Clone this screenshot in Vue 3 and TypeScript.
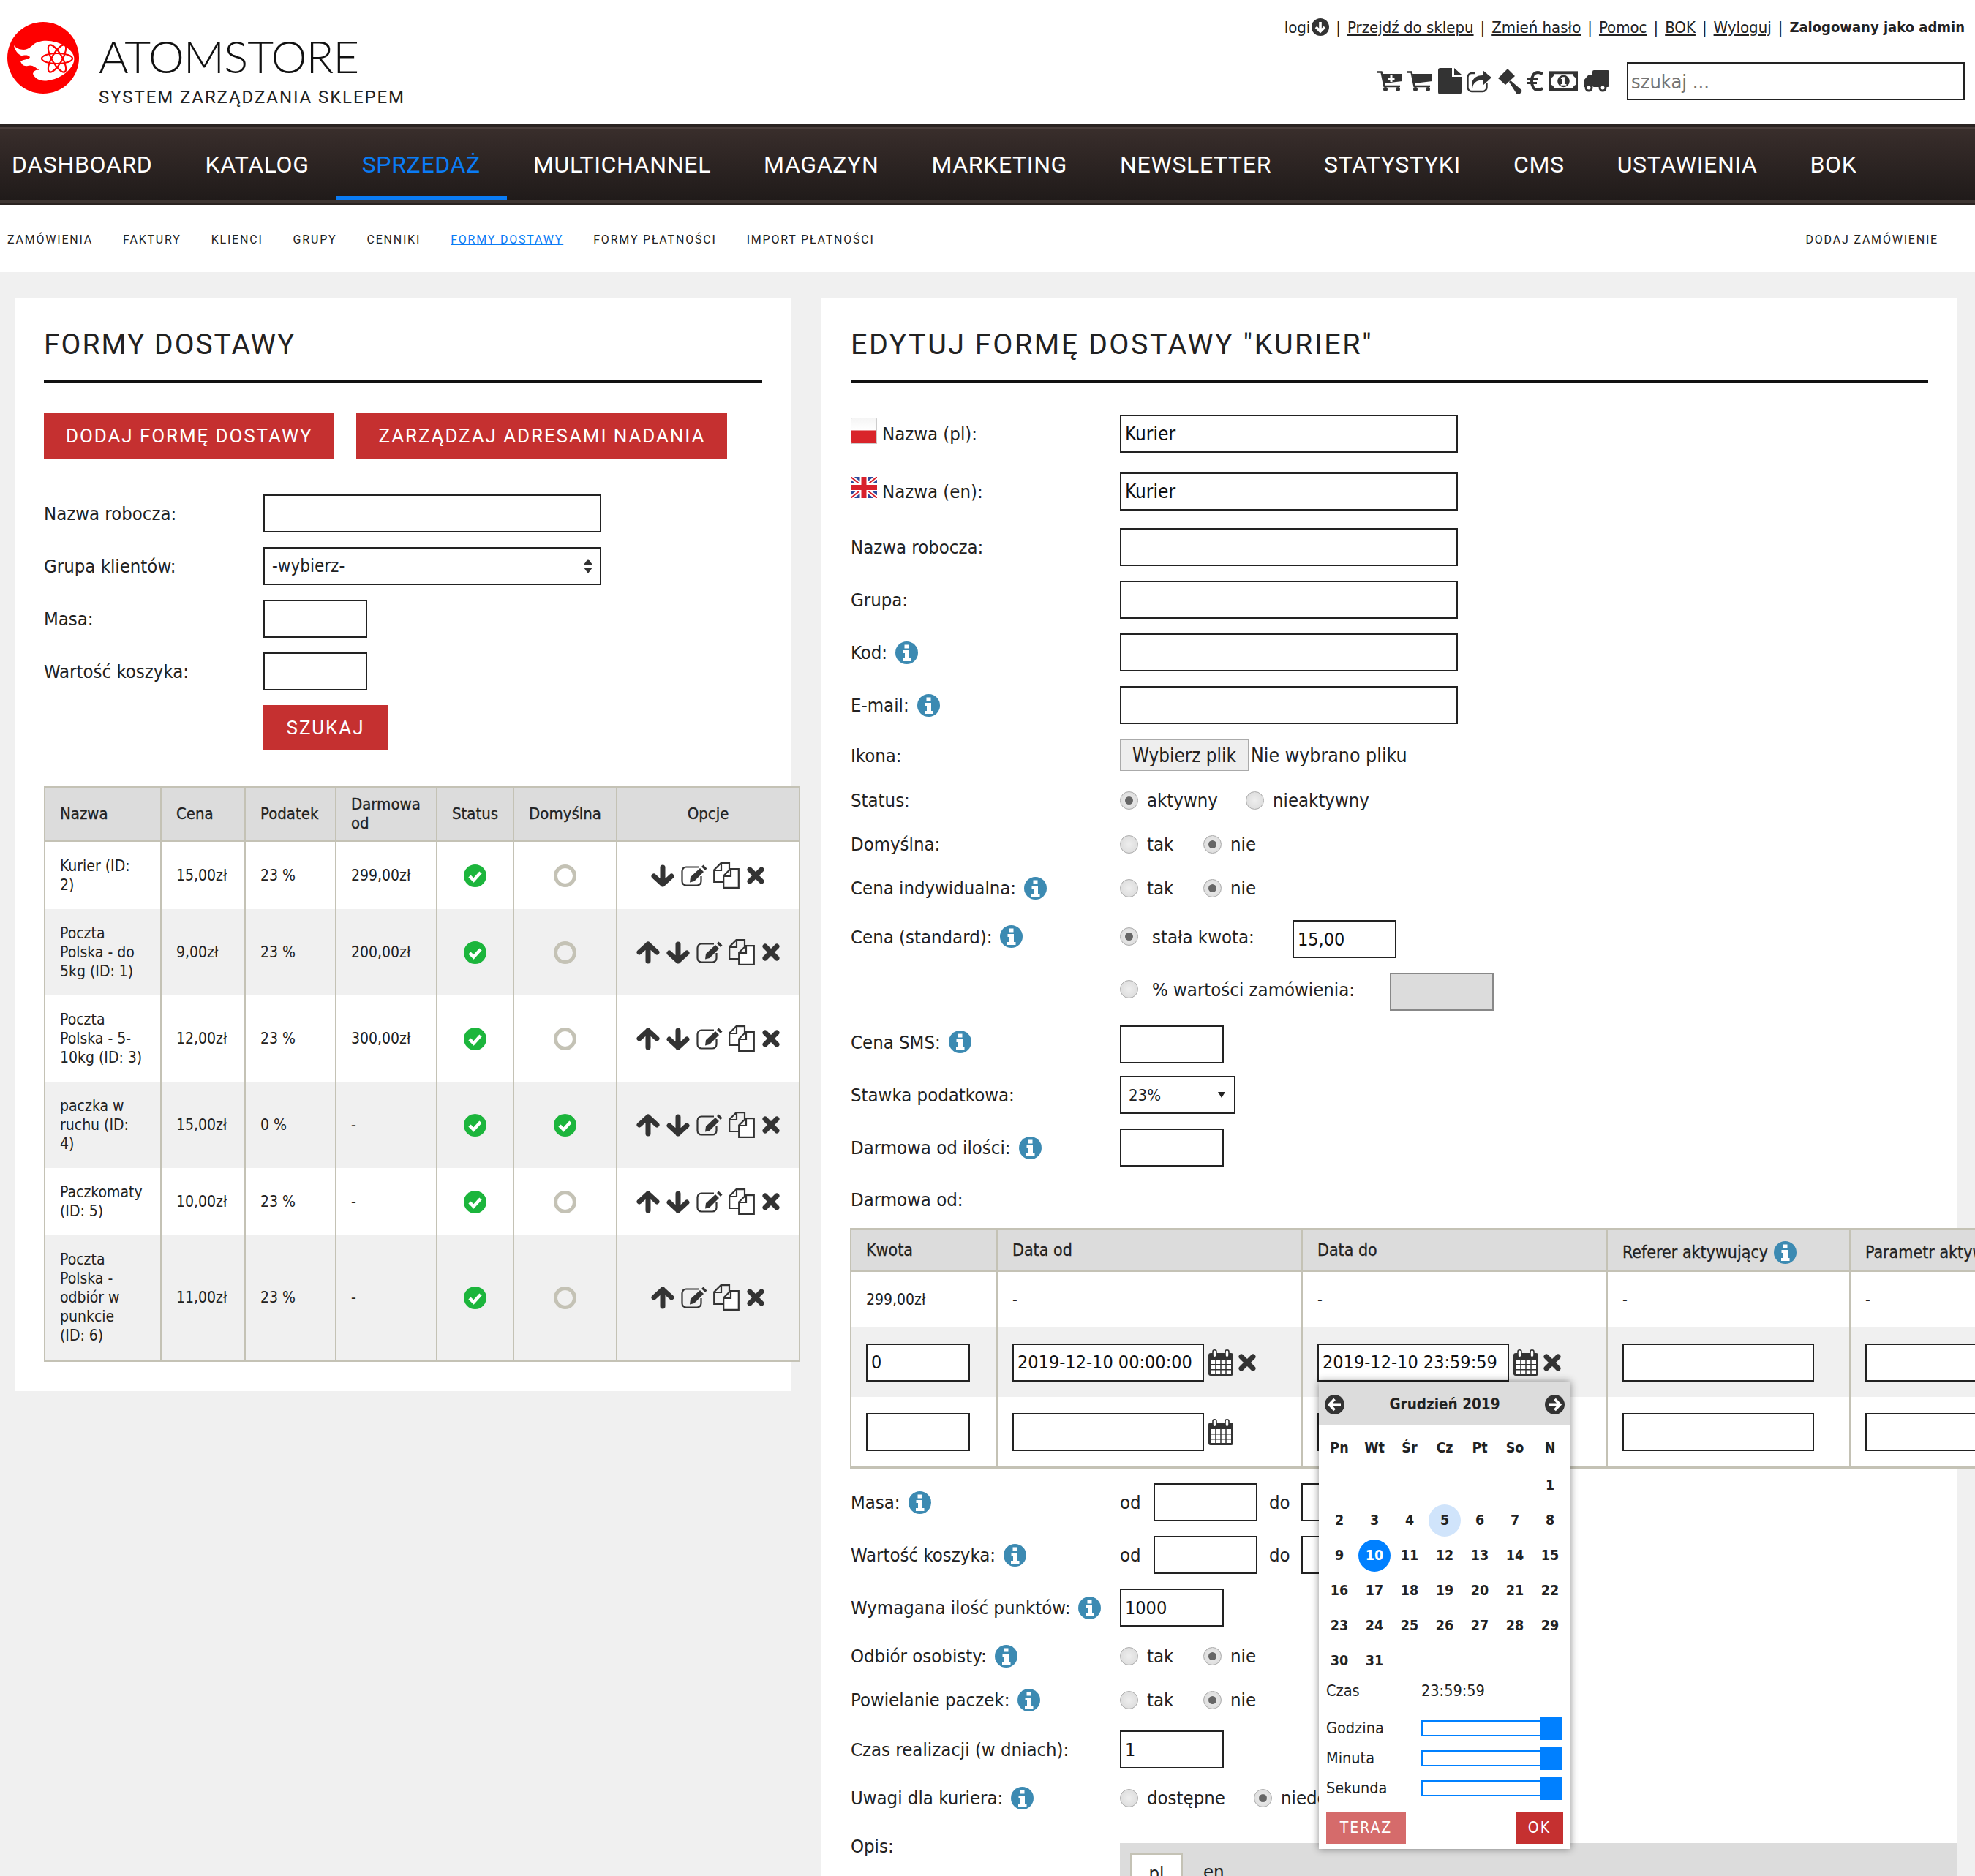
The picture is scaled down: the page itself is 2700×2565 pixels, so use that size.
<script setup lang="ts">
interface Row { name: string; price: string; tax: string; free: string; def: boolean; up: boolean; down: boolean }
const nav: string[] = ['DASHBOARD', 'KATALOG', 'SPRZEDAŻ', 'MULTICHANNEL', 'MAGAZYN', 'MARKETING', 'NEWSLETTER', 'STATYSTYKI', 'CMS', 'USTAWIENIA', 'BOK']
const sub: string[] = ['ZAMÓWIENIA', 'FAKTURY', 'KLIENCI', 'GRUPY', 'CENNIKI', 'FORMY DOSTAWY', 'FORMY PŁATNOŚCI', 'IMPORT PŁATNOŚCI']
const topLinks: string[] = ['Przejdź do sklepu', 'Zmień hasło', 'Pomoc', 'BOK', 'Wyloguj']
const topIcons: string[] = ['cartplus', 'cart', 'file', 'share', 'gavel', 'euro', 'money', 'truck']
const rows: Row[] = [
  { name: 'Kurier (ID: 2)', price: '15,00zł', tax: '23 %', free: '299,00zł', def: false, up: false, down: true },
  { name: 'Poczta Polska - do 5kg (ID: 1)', price: '9,00zł', tax: '23 %', free: '200,00zł', def: false, up: true, down: true },
  { name: 'Poczta Polska - 5-10kg (ID: 3)', price: '12,00zł', tax: '23 %', free: '300,00zł', def: false, up: true, down: true },
  { name: 'paczka w ruchu (ID: 4)', price: '15,00zł', tax: '0 %', free: '-', def: true, up: true, down: true },
  { name: 'Paczkomaty (ID: 5)', price: '10,00zł', tax: '23 %', free: '-', def: false, up: true, down: true },
  { name: 'Poczta Polska - odbiór w punkcie (ID:\u00a06)', price: '11,00zł', tax: '23 %', free: '-', def: false, up: true, down: false },
]
const weekdays: string[] = ['Pn', 'Wt', 'Śr', 'Cz', 'Pt', 'So', 'N']
const blanks: number[] = [1, 2, 3, 4, 5, 6]
const days: number[] = Array.from({ length: 31 }, (_, i) => i + 1)
const sliders: string[] = ['Godzina', 'Minuta', 'Sekunda']
</script>

<template>
  <div class="page">
    <svg class="defs" aria-hidden="true">
      <symbol id="i-down" viewBox="0 0 32 31"><path d="M16 4v23M4 16l12 11 12-11" fill="none" stroke="#333" stroke-width="7" stroke-linecap="round" stroke-linejoin="round" /></symbol>
      <symbol id="i-up" viewBox="0 0 32 31"><path d="M16 27V4M4 15L16 4l12 11" fill="none" stroke="#333" stroke-width="7" stroke-linecap="round" stroke-linejoin="round" /></symbol>
      <symbol id="i-x" viewBox="0 0 26 26"><path d="M5 5l16 16M21 5L5 21" fill="none" stroke="#333" stroke-width="7" stroke-linecap="round" /></symbol>
      <symbol id="i-edit" viewBox="0 0 36 30">
        <path d="M24 3.500H7A5.500 5.500 0 0 0 1.500 9v14A5.500 5.500 0 0 0 7 28.500h15a5.500 5.500 0 0 0 5.500-5.500V16" fill="none" stroke="#333" stroke-width="2.200" />
        <path d="M13 17L26 5l5 5-13 13-6 1.500zM28 3l2.500-2.500 5 5L33 8z" fill="#333" />
      </symbol>
      <symbol id="i-copy" viewBox="0 0 36 36">
        <path d="M14 27H1.200V10.500L10.500 1.200H22V10M1.200 11H11V1.200" fill="none" stroke="#333" stroke-width="2.200" />
        <path d="M14.200 34.800V18.500L23.500 9.200H34.800V34.800zM14.200 19H24V9.200" fill="#fff" stroke="#333" stroke-width="2.200" />
      </symbol>
      <symbol id="i-info" viewBox="0 0 31 31">
        <circle cx="15.500" cy="15.500" r="15.500" fill="#3c8ab2" />
        <path d="M12.500 4.500h6v5h-6zM10.500 12h8.500v11h2.500v4H10v-4h3v-7h-2.500z" fill="#fff" />
      </symbol>
      <symbol id="i-check" viewBox="0 0 31 31">
        <circle cx="15.500" cy="15.500" r="15.500" fill="#1cb53c" />
        <path d="M8 16l5.500 5.500L23 11" fill="none" stroke="#fff" stroke-width="4.500" />
      </symbol>
      <symbol id="i-ring" viewBox="0 0 31 31"><circle cx="15.500" cy="15.500" r="13" fill="none" stroke="#c4c2b5" stroke-width="5" /></symbol>
      <symbol id="i-cal" viewBox="0 0 34 36">
        <rect y="5" width="34" height="31" rx="3" fill="#333" />
        <path d="M3 14h28v6H3zM3 21.500h28V27H3zM3 28.500h28V33H3z" fill="#fff" />
        <path d="M10 14v19M17 14v19M24 14v19" stroke="#333" stroke-width="1.500" />
        <rect x="6" y="0.800" width="5" height="10" rx="2.500" fill="#fff" stroke="#333" stroke-width="1.600" />
        <rect x="23" y="0.800" width="5" height="10" rx="2.500" fill="#fff" stroke="#333" stroke-width="1.600" />
      </symbol>
      <symbol id="i-cart" viewBox="0 0 34 28">
        <path d="M0 1.500h5.500L9.500 21H31" fill="none" stroke="#333" stroke-width="2.500" />
        <path d="M7 4h27v10L9 17z" fill="#333" />
        <circle cx="11" cy="25" r="3" fill="#333" /><circle cx="28" cy="25" r="3" fill="#333" />
      </symbol>
      <symbol id="i-cartplus" viewBox="0 0 34 28">
        <path d="M0 1.500h5.500L9.500 21H31" fill="none" stroke="#333" stroke-width="2.500" />
        <path d="M7 4h27v10L9 17z" fill="#333" />
        <path d="M17.500 6h3v3h3v3h-3v3h-3v-3h-3V9h3z" fill="#fff" />
        <circle cx="11" cy="25" r="3" fill="#333" /><circle cx="28" cy="25" r="3" fill="#333" />
      </symbol>
      <symbol id="i-file" viewBox="0 0 32 36">
        <path d="M0 3Q0 0 3 0h16v12h13v21q0 3-3 3H3q-3 0-3-3zM22 0l10 9H22z" fill="#333" />
      </symbol>
      <symbol id="i-share" viewBox="0 0 34 31">
        <path d="M12 4H7a5.500 5.500 0 0 0-5.500 5.500v14A5.500 5.500 0 0 0 7 29h15a5.500 5.500 0 0 0 5.500-5.500V18" fill="none" stroke="#333" stroke-width="2.400" />
        <path d="M22 0l12 10-12 11v-7C14 13 9 17 8 25 5 14 11 7 22 7z" fill="#333" />
      </symbol>
      <symbol id="i-gavel" viewBox="0 0 34 35">
        <path d="M14 0l10 10-13 12L1 13zM16 18l2-2 15 13q1 2-.5 3.500L30 35q-2 1-3.500-.5z" fill="#333" />
      </symbol>
      <symbol id="i-euro" viewBox="0 0 22 28">
        <path d="M21 4Q17 2 14.500 2C9 2 6 7 6 14s3 12 8.500 12q2.500 0 6.500-2" fill="none" stroke="#333" stroke-width="4" />
        <path d="M0 10h15v3H0zM0 15h13v3H0z" fill="#333" />
      </symbol>
      <symbol id="i-money" viewBox="0 0 40 28">
        <rect width="40" height="28" fill="#333" />
        <path d="M7 4h26q1 4 4 5v10q-3 1-4 5H7q-1-4-4-5V9q3-1 4-5z" fill="#fff" />
        <circle cx="20" cy="14" r="8.500" fill="#333" />
        <path d="M18 8h3.500v10H24v2h-8v-2h2v-7h-2z" fill="#fff" />
      </symbol>
      <symbol id="i-truck" viewBox="0 0 36 30">
        <rect x="13" width="23" height="23" rx="2" fill="#333" />
        <path d="M12 7H7L1 14v9h11z" fill="#333" />
        <circle cx="8" cy="24" r="5.500" fill="#333" /><circle cx="8" cy="24" r="2.500" fill="#fff" />
        <circle cx="27" cy="24" r="5.500" fill="#333" /><circle cx="27" cy="24" r="2.500" fill="#fff" />
      </symbol>
      <symbol id="i-cdown" viewBox="0 0 24 24">
        <circle cx="12" cy="12" r="12" fill="#333" />
        <path d="M12 5v12M6 12l6 6 6-6" fill="none" stroke="#fff" stroke-width="3.600" />
      </symbol>
      <symbol id="i-cleft" viewBox="0 0 27 27">
        <circle cx="13.500" cy="13.500" r="13.500" fill="#333" />
        <path d="M22 13.500H7M13.500 6l-7 7.500 7 7.500" fill="none" stroke="#fff" stroke-width="3.800" />
      </symbol>
      <symbol id="i-cright" viewBox="0 0 27 27">
        <circle cx="13.500" cy="13.500" r="13.500" fill="#333" />
        <path d="M5 13.500h15M13.500 6l7 7.500-7 7.500" fill="none" stroke="#fff" stroke-width="3.800" />
      </symbol>
    </svg>

    <header class="top">
      <div class="brand">
        <svg class="logo" viewBox="0 0 98 98">
          <circle cx="49" cy="49" r="49" fill="#fe0000" />
          <path d="M9 32c5 6 13 7 18 5 6-2 9-9 17-10 8-3 26-1 36 7 8 6 13 12 11 20-3 12-19 24-35 26-10 2-18-2-21-9 1-5 5-6 9-5-6-4-10-8-16-6-6 1-8-2-10-6 6-4 12-2 13-6-3-4-9-2-12-2-5-2-9-8-10-14z" fill="#fff" />
          <g fill="none" stroke="#fe0000" stroke-width="2.200">
            <ellipse cx="68" cy="50" rx="21" ry="7" />
            <ellipse cx="68" cy="50" rx="21" ry="7" transform="rotate(60 68 50)" />
            <ellipse cx="68" cy="50" rx="21" ry="7" transform="rotate(120 68 50)" />
          </g>
        </svg>
        <div class="brand-text">
          <div class="brand-name">ATOMSTORE</div>
          <div class="brand-sub">SYSTEM ZARZĄDZANIA SKLEPEM</div>
        </div>
      </div>
      <div class="top-right">
        <div class="links">
          <span class="logi">logi<svg class="i-cdown"><use href="#i-cdown" /></svg></span>
          <template v-for="l in topLinks" :key="l">
            <span class="sep">|</span><a class="tlink">{{ l }}</a>
          </template>
          <span class="sep">|</span><b>Zalogowany jako admin</b>
        </div>
        <div class="tools">
          <svg v-for="ic in topIcons" :key="ic" :class="'t-' + ic"><use :href="'#i-' + ic" /></svg>
          <input class="search" placeholder="szukaj ..." />
        </div>
      </div>
    </header>

    <nav class="nav">
      <a v-for="n in nav" :key="n" class="nav-item" :class="{ active: n === 'SPRZEDAŻ' }">{{ n }}</a>
    </nav>

    <div class="subnav">
      <div class="sub-left">
        <a v-for="s in sub" :key="s" :class="{ current: s === 'FORMY DOSTAWY' }">{{ s }}</a>
      </div>
      <a>DODAJ ZAMÓWIENIE</a>
    </div>

    <main class="content">
      <section class="panel left">
        <h2>FORMY DOSTAWY</h2>
        <div class="btns">
          <button class="btn">DODAJ FORMĘ DOSTAWY</button>
          <button class="btn">ZARZĄDZAJ ADRESAMI NADANIA</button>
        </div>
        <div class="lform">
          <label class="lrow"><span>Nazwa robocza:</span><input class="inp w-l" /></label>
          <label class="lrow"><span>Grupa klientów:</span>
            <span class="sel w-l"><span>-wybierz-</span><i class="updown"></i></span>
          </label>
          <label class="lrow"><span>Masa:</span><input class="inp w-s" /></label>
          <label class="lrow"><span>Wartość koszyka:</span><input class="inp w-s" /></label>
          <div class="lrow"><span></span><button class="btn btn-search">SZUKAJ</button></div>
        </div>

        <table class="tbl list">
          <colgroup><col class="c1" /><col class="c2" /><col class="c3" /><col class="c4" /><col class="c5" /><col class="c6" /><col class="c7" /></colgroup>
          <thead>
            <tr><th>Nazwa</th><th>Cena</th><th>Podatek</th><th>Darmowa od</th><th class="ctr">Status</th><th class="ctr">Domyślna</th><th class="ctr">Opcje</th></tr>
          </thead>
          <tbody>
            <tr v-for="r in rows" :key="r.name">
              <td>{{ r.name }}</td>
              <td>{{ r.price }}</td>
              <td>{{ r.tax }}</td>
              <td>{{ r.free }}</td>
              <td class="ctr"><svg class="i-state"><use href="#i-check" /></svg></td>
              <td class="ctr"><svg class="i-state"><use :href="r.def ? '#i-check' : '#i-ring'" /></svg></td>
              <td>
                <div class="opts">
                  <svg v-if="r.up" class="i-arrow"><use href="#i-up" /></svg>
                  <svg v-if="r.down" class="i-arrow"><use href="#i-down" /></svg>
                  <svg class="i-edit"><use href="#i-edit" /></svg>
                  <svg class="i-copy"><use href="#i-copy" /></svg>
                  <svg class="i-x"><use href="#i-x" /></svg>
                </div>
              </td>
            </tr>
          </tbody>
        </table>
      </section>

      <section class="panel right">
        <h2>EDYTUJ FORMĘ DOSTAWY "KURIER"</h2>
        <div class="form">
          <div class="row">
            <span class="lab"><span class="flag-pl"></span>Nazwa (pl):</span>
            <input class="inp w-l" value="Kurier" />
          </div>
          <div class="row mt-7">
            <span class="lab"><svg class="flag-en" viewBox="0 0 36 29"><rect width="36" height="29" fill="#2b4a9b" /><path d="M0 0l36 29M36 0L0 29" stroke="#fff" stroke-width="6" /><path d="M0 0l36 29M36 0L0 29" stroke="#d8202c" stroke-width="2" /><path d="M18 0v29M0 14.500h36" stroke="#fff" stroke-width="11" /><path d="M18 0v29M0 14.500h36" stroke="#d8202c" stroke-width="7" /></svg>Nazwa (en):</span>
            <input class="inp w-l" value="Kurier" />
          </div>
          <div class="row mt-4"><span class="lab">Nazwa robocza:</span><input class="inp w-l" /></div>
          <div class="row"><span class="lab">Grupa:</span><input class="inp w-l" /></div>
          <div class="row"><span class="lab">Kod:<svg class="i-info"><use href="#i-info" /></svg></span><input class="inp w-l" /></div>
          <div class="row"><span class="lab">E-mail:<svg class="i-info"><use href="#i-info" /></svg></span><input class="inp w-l" /></div>
          <div class="row file-row"><span class="lab">Ikona:</span><span class="file"><button class="file-btn">Wybierz plik</button>Nie wybrano pliku</span></div>
          <div class="row tr"><span class="lab">Status:</span>
            <span class="radios"><span class="radio on"></span><span class="rt r1">aktywny</span><span class="radio"></span><span class="rt">nieaktywny</span></span>
          </div>
          <div class="row tr"><span class="lab">Domyślna:</span>
            <span class="radios"><span class="radio"></span><span class="rt r2">tak</span><span class="radio on"></span><span class="rt">nie</span></span>
          </div>
          <div class="row tr"><span class="lab">Cena indywidualna:<svg class="i-info"><use href="#i-info" /></svg></span>
            <span class="radios"><span class="radio"></span><span class="rt r2">tak</span><span class="radio on"></span><span class="rt">nie</span></span>
          </div>
          <div class="row mt-4 lift"><span class="lab">Cena (standard):<svg class="i-info"><use href="#i-info" /></svg></span>
            <span class="radios"><span class="radio on"></span><span class="rt r3">stała kwota:</span><input class="inp w-s" value="15,00" /></span>
          </div>
          <div class="row lift"><span class="lab"></span>
            <span class="radios"><span class="radio"></span><span class="rt r4">% wartości zamówienia:</span><input class="inp w-s dis" disabled /></span>
          </div>
          <div class="row lift"><span class="lab">Cena SMS:<svg class="i-info"><use href="#i-info" /></svg></span><input class="inp w-s" /></div>
          <div class="row tight"><span class="lab">Stawka podatkowa:</span><span class="sel w-m"><span>23%</span><i class="tri"></i></span></div>
          <div class="row"><span class="lab">Darmowa od ilości:<svg class="i-info"><use href="#i-info" /></svg></span><input class="inp w-s" /></div>
          <div class="row tr mt-5"><span class="lab">Darmowa od:</span></div>

          <table class="tbl wide">
            <colgroup><col class="d1" /><col class="d2" /><col class="d3" /><col class="d4" /><col class="d5" /></colgroup>
            <thead>
              <tr><th>Kwota</th><th>Data od</th><th>Data do</th><th class="nudge">Referer aktywujący<svg class="i-info"><use href="#i-info" /></svg></th><th class="nudge">Parametr aktywujący</th></tr>
            </thead>
            <tbody>
              <tr><td>299,00zł</td><td>-</td><td>-</td><td>-</td><td>-</td></tr>
              <tr>
                <td class="icell"><input class="inp w-s" value="0" /></td>
                <td class="icell"><span class="dt"><input class="inp w-d" value="2019-12-10 00:00:00" /><svg class="i-cal"><use href="#i-cal" /></svg><svg class="i-x d-x"><use href="#i-x" /></svg></span></td>
                <td class="icell">
                  <span class="dt"><span class="pop-anchor"><input class="inp w-d" value="2019-12-10 23:59:59" />
                    <div class="cal">
                      <div class="cal-head">
                        <svg class="i-nav"><use href="#i-cleft" /></svg>
                        <b>Grudzień 2019</b>
                        <svg class="i-nav"><use href="#i-cright" /></svg>
                      </div>
                      <div class="cal-week"><span v-for="w in weekdays" :key="w">{{ w }}</span></div>
                      <div class="cal-days">
                        <span v-for="b in blanks" :key="'b' + b"></span>
                        <span v-for="d in days" :key="d" class="day" :class="{ today: d === 5, sel2: d === 10 }">{{ d }}</span>
                      </div>
                      <div class="cal-time"><span>Czas</span><span>23:59:59</span></div>
                      <div v-for="s in sliders" :key="s" class="cal-slider"><span>{{ s }}</span><span class="track"><i class="handle"></i></span></div>
                      <div class="cal-btns"><button class="cbtn now">TERAZ</button><button class="cbtn">OK</button></div>
                    </div>
                  </span><svg class="i-cal"><use href="#i-cal" /></svg><svg class="i-x d-x"><use href="#i-x" /></svg></span>
                </td>
                <td class="icell"><input class="inp w-d" /></td>
                <td class="icell"><input class="inp w-d" /></td>
              </tr>
              <tr>
                <td class="icell"><input class="inp w-s" /></td>
                <td class="icell"><span class="dt"><input class="inp w-d" /><svg class="i-cal"><use href="#i-cal" /></svg></span></td>
                <td class="icell"><span class="dt"><input class="inp w-d" /><svg class="i-cal"><use href="#i-cal" /></svg></span></td>
                <td class="icell"><input class="inp w-d" /></td>
                <td class="icell"><input class="inp w-d" /></td>
              </tr>
            </tbody>
          </table>

          <div class="row"><span class="lab">Masa:<svg class="i-info"><use href="#i-info" /></svg></span>
            <span class="range"><span>od</span><input class="inp w-s" /><span>do</span><input class="inp w-s" /></span>
          </div>
          <div class="row"><span class="lab">Wartość koszyka:<svg class="i-info"><use href="#i-info" /></svg></span>
            <span class="range"><span>od</span><input class="inp w-s" /><span>do</span><input class="inp w-s" /></span>
          </div>
          <div class="row"><span class="lab">Wymagana ilość punktów:<svg class="i-info"><use href="#i-info" /></svg></span><input class="inp w-s" value="1000" /></div>
          <div class="row tr"><span class="lab">Odbiór osobisty:<svg class="i-info"><use href="#i-info" /></svg></span>
            <span class="radios"><span class="radio"></span><span class="rt r2">tak</span><span class="radio on"></span><span class="rt">nie</span></span>
          </div>
          <div class="row tr"><span class="lab">Powielanie paczek:<svg class="i-info"><use href="#i-info" /></svg></span>
            <span class="radios"><span class="radio"></span><span class="rt r2">tak</span><span class="radio on"></span><span class="rt">nie</span></span>
          </div>
          <div class="row mt-2"><span class="lab">Czas realizacji (w dniach):</span><input class="inp w-s" value="1" /></div>
          <div class="row tr"><span class="lab">Uwagi dla kuriera:<svg class="i-info"><use href="#i-info" /></svg></span>
            <span class="radios"><span class="radio"></span><span class="rt r5">dostępne</span><span class="radio on"></span><span class="rt">niedostępne</span></span>
          </div>
          <div class="row opis"><span class="lab">Opis:</span>
            <div class="editor"><span class="tab on">pl</span><span class="tab">en</span></div>
          </div>
        </div>
      </section>
    </main>
  </div>
</template>

<style>
html, body { margin: 0; background: #f0f0f0; }
</style>

<style scoped>
.page {
  width: 2700px; height: 2565px; overflow: hidden; background: #f0f0f0; color: #222; position: relative;
  font-family: "DejaVu Sans Condensed", "DejaVu Sans", sans-serif; font-stretch: condensed; font-size: 25.500px;
}
.defs { position: absolute; width: 0; height: 0; }
.top { height: 170px; background: #fff; display: flex; justify-content: space-between; box-sizing: border-box; }
.brand { display: flex; padding: 30px 0 0 10px; gap: 27px; }
.logo { width: 98px; height: 98px; }
.brand-text { padding-top: 13px; }
.brand-name { font-family: Lato, sans-serif; font-weight: 300; font-size: 62px; line-height: 66px; letter-spacing: -1px; color: #111; font-stretch: normal; }
.brand-sub { font-family: Roboto, sans-serif; font-stretch: normal; font-size: 24px; letter-spacing: 1.900px; line-height: 30px; margin-top: 9px; }
.top-right { display: flex; flex-direction: column; align-items: flex-end; padding-right: 14px; }
.links { margin-top: 22px; height: 30px; display: flex; align-items: center; font-size: 22px; }
.links b { font-size: 20px; }
.logi { display: inline-flex; align-items: center; gap: 2px; }
.i-cdown { width: 24px; height: 24px; }
.sep { margin: 0 9px; }
.tlink { text-decoration: underline; }
.tools { display: flex; align-items: center; margin-top: 33px; gap: 7.500px; }
.tools svg { display: block; }
.t-cartplus, .t-cart { width: 34px; height: 28px; }
.t-file { width: 32px; height: 36px; }
.t-share { width: 34px; height: 31px; }
.t-gavel { width: 34px; height: 35px; }
.t-euro { width: 22px; height: 28px; }
.t-money { width: 39px; height: 28px; }
.t-truck { width: 36px; height: 30px; margin-right: 16.500px; }
.search { width: 462px; height: 52px; box-sizing: border-box; border: 2px solid #222; padding: 0 4px; font: inherit; font-size: 27px; font-stretch: condensed; outline: none; }
.search::placeholder { color: #757575; opacity: 1; }

.nav { height: 110px; display: flex; box-sizing: border-box; padding-left: 16px; background: linear-gradient(#3a2f2c 0, #342a28 20%, #1f1a19 100%); border-top: 3px solid #2a2321; border-bottom: 3px solid #2a2321; box-shadow: inset 0 3px 0 #4a3f3c, inset 0 -4px 0 #3e3532; }
.nav-item { font-family: Roboto, sans-serif; font-stretch: normal; color: #fff; font-size: 32px; letter-spacing: 0.650px; line-height: 104px; padding: 0 36px; }
.nav-item:first-child { padding-left: 0; }
.nav-item.active { color: #0a7cf5; border-bottom: 6px solid #0a7cf5; box-sizing: content-box; height: 95px; }

.subnav { height: 92px; background: #fff; display: flex; justify-content: space-between; align-items: center; padding: 3px 50px 0 10px; box-sizing: border-box; }
.subnav a { font-family: Roboto, sans-serif; font-stretch: normal; font-size: 16px; letter-spacing: 1.800px; color: #222; }
.sub-left { display: flex; gap: 41px; }
.subnav a.current { color: #0a7cf5; text-decoration: underline; }

.content { display: flex; align-items: flex-start; padding: 36px 24px 0 20px; gap: 41px; }
.panel { background: #fff; box-sizing: border-box; padding: 40px 40px 0; }
.panel.left { width: 1062px; height: 1494px; flex: none; }
.panel.right { flex: 1; min-width: 0; height: 2300px; }
h2 { margin: 0; font-family: Roboto, sans-serif; font-stretch: normal; font-weight: 400; font-size: 39px; letter-spacing: 2px; line-height: 42px; padding: 2px 0 27px; border-bottom: 5px solid #111; color: #222; }
.right h2 { font-size: 39.500px; letter-spacing: 2.500px; }
.btns { display: flex; gap: 30px; margin-top: 41px; }
.btn { background: #c53030; color: #fff; border: 0; height: 62px; padding: 0 30px; font-family: Roboto, sans-serif; font-size: 26px; letter-spacing: 1.900px; }
.lform { display: flex; flex-direction: column; gap: 20px; margin-top: 49px; }
.lrow { display: grid; grid-template-columns: 300px 1fr; align-items: center; }
.btn-search { width: 170px; padding: 0; justify-self: start; }
.inp { height: 52px; box-sizing: border-box; border: 2px solid #222; padding: 0 5px; font: inherit; font-size: 25px; font-stretch: condensed; color: #111; background: #fff; outline: none; border-radius: 0; display: block; }
.w-l { width: 462px; font-size: 26px; } .w-s { width: 142px; } .w-m { width: 158px; font-size: 22px; } .w-d { width: 262px; }
.dis { background: #dcdcdc; border-color: #888; border-width: 2px; }
.sel { height: 52px; box-sizing: border-box; border: 2px solid #222; display: flex; justify-content: space-between; align-items: center; padding: 0 10px; position: relative; background: #fff; }
.sel.w-l { font-size: 24px; }
.updown { width: 12px; height: 20px; position: relative; display: block; }
.updown::before, .updown::after { content: ""; position: absolute; left: 0; border-left: 6px solid transparent; border-right: 6px solid transparent; }
.updown::before { top: 0; border-bottom: 8px solid #333; }
.updown::after { bottom: 0; border-top: 8px solid #333; }
.tri { border-left: 5px solid transparent; border-right: 5px solid transparent; border-top: 8px solid #222; display: block; margin-right: 2px; }

.tbl { border-collapse: collapse; table-layout: fixed; font-size: 21px; line-height: 26px; background: #fff; }
.tbl th { background: #dcdcdc; text-align: left; font-weight: 400; font-size: 22px; -webkit-text-stroke: 0.300px #222; padding: 9px 20px; border: 2px solid #c4c2b5; border-bottom-width: 3px; border-top-width: 3px; }
.tbl td { padding: 20px; border-left: 2px solid #c4c2b5; border-right: 2px solid #c4c2b5; vertical-align: middle; }
.tbl tbody tr:nth-child(even) td { background: #f0f0f0; }
.tbl tbody tr:last-child td { border-bottom: 3px solid #c4c2b5; }
.tbl .ctr { text-align: center; padding-left: 5px; padding-right: 5px; }
.list { width: 1032px; margin-top: 49px; }
.c1 { width: 159px; } .c2 { width: 115px; } .c3 { width: 124px; } .c4 { width: 138px; } .c5 { width: 105px; } .c6 { width: 141px; } .c7 { width: 250px; }
.i-state { width: 31px; height: 31px; display: block; margin: 0 auto; }
.opts { display: flex; align-items: center; justify-content: center; gap: 9px; margin: 0 -15px; }
.opts svg { display: block; flex: none; }
.i-arrow { width: 32px; height: 31px; }
.i-edit { width: 36px; height: 30px; }
.i-copy { width: 36px; height: 36px; margin-left: -1px; }
.i-x { width: 26px; height: 26px; }
.i-info { width: 31px; height: 31px; margin-left: 11px; flex: none; }

.form { display: flex; flex-direction: column; gap: 20px; margin-top: 43px; }
.row { display: grid; grid-template-columns: 368px 1fr; align-items: center; min-height: 40px; }
.lab { display: flex; align-items: center; white-space: nowrap; }
.lift .lab { margin-top: -7px; }
.lift .radio, .lift .rt { margin-top: -7px; }
.mt-7 { margin-top: 7px; } .mt-4 { margin-top: 4px; } .mt-5 { margin-top: 5px; } .mt-2 { margin-top: 2px; }
.tight { margin-top: -3px; }
.file-row { min-height: 43px; margin-top: 1px; }
.file { display: flex; align-items: center; gap: 3px; font-size: 26.500px; }
.file-btn { width: 176px; height: 43px; box-sizing: border-box; border: 1px solid #aaa; background: #eee; font: inherit; font-size: 25.800px; font-stretch: condensed; color: #222; padding: 0; }
.flag-pl { width: 36px; height: 36px; margin: -9px 7px 0 0; border-radius: 2px; background: linear-gradient(#f4f4f4 0, #fff 47%, #d9242a 50%, #d9242a 100%); box-shadow: inset 0 0 0 1px #ccc; flex: none; }
.flag-en { width: 36px; height: 29px; margin: -12px 7px 0 0; flex: none; }
.radios { display: flex; align-items: center; }
.radio { width: 25px; height: 25px; box-sizing: border-box; border-radius: 50%; border: 1px solid #aaa; background: radial-gradient(#eee, #d8d8d8); position: relative; flex: none; }
.radio.on::after { content: ""; position: absolute; left: 6px; top: 6px; width: 11px; height: 11px; border-radius: 50%; background: #666; }
.rt { margin-left: 12px; }
.r1 { width: 135px; flex: none; }
.r2 { width: 77px; flex: none; }
.r3 { margin-left: 19px; width: 192px; flex: none; }
.r4 { margin-left: 19px; width: 325px; flex: none; }
.r5 { width: 146px; flex: none; }
.range { display: flex; align-items: center; gap: 16px; }
.range span:first-child { width: 30px; }
.range span:nth-child(3) { width: 28px; }

.wide { width: 1650px; margin: -1px 0 0 -1px; position: relative; }
.d1 { width: 200px; } .d2 { width: 417px; } .d3 { width: 417px; } .d4 { width: 332px; } .d5 { width: 300px; }
.wide th { padding: 0 20px; height: 48px; font-size: 23px; }
.nudge { white-space: nowrap; padding-top: 6px !important; }
.wide .nudge .i-info { vertical-align: middle; margin: -6px 0 -4px 8px; display: inline-block; }
.wide td { padding: 0 20px; height: 76px; }
.wide td.icell { height: 95px; }
.dt { display: flex; align-items: center; }
.dt .i-cal { width: 34px; height: 36px; margin-left: 6px; flex: none; }
.dt .d-x { width: 26px; height: 26px; margin-left: 6px; flex: none; }
.pop-anchor { position: relative; display: block; }
.cal { position: absolute; left: 2px; top: 52px; width: 344px; height: 639px; background: #fff; box-shadow: 0 0 10px rgba(0, 0, 0, .45); z-index: 5; box-sizing: border-box; font-size: 21.500px; line-height: 26px; }
.cal-head { height: 60px; background: #dcdcdc; display: flex; justify-content: space-between; align-items: center; padding: 3px 8px 0; box-sizing: border-box; font-size: 20.500px; }
.i-nav { width: 27px; height: 27px; }
.cal-week, .cal-days { display: grid; grid-template-columns: repeat(7, 48px); padding-left: 4px; text-align: center; font-weight: 700; font-size: 19.500px; }
.cal-week { height: 48px; align-items: center; margin-top: 7px; }
.cal-days { grid-auto-rows: 48px; align-items: center; margin-top: 3px; justify-items: center; }
.day { width: 44px; height: 44px; line-height: 44px; border-radius: 50%; }
.today { background: #d0e4fb; }
.sel2 { background: #0080ff; color: #fff; }
.cal-time { display: grid; grid-template-columns: 130px 1fr; padding: 4px 10px 0; height: 30px; }
.cal-slider { display: grid; grid-template-columns: 130px 193px; align-items: center; padding-left: 10px; height: 41px; }
.cal-time + .cal-slider { margin-top: 14px; }
.track { height: 22px; box-sizing: border-box; border: 2px solid #0080ff; position: relative; display: block; }
.handle { position: absolute; right: -2px; top: -6px; width: 30px; height: 31px; background: #0080ff; }
.cal-btns { display: flex; justify-content: space-between; padding: 11px 10px 0; }
.cbtn { height: 44px; width: 65px; border: 0; background: #c53030; color: #fff; font-size: 21px; letter-spacing: 2px; font-family: inherit; font-stretch: condensed; padding: 0; }
.cbtn.now { width: 109px; background: #d56b6b; }

.opis { align-items: start; margin-top: 22px; }
.opis .lab { margin-top: -16px; line-height: 40px; }
.editor { background: #dcdcdc; height: 60px; margin-right: -40px; padding: 14px 0 0 14px; box-sizing: border-box; display: flex; gap: 8px; }
.tab { padding: 10px 20px; }
.tab.on { background: #fff; border: 2px solid #c4c2b5; border-bottom: 0; width: 72px; box-sizing: border-box; text-align: center; height: 60px; }
</style>
